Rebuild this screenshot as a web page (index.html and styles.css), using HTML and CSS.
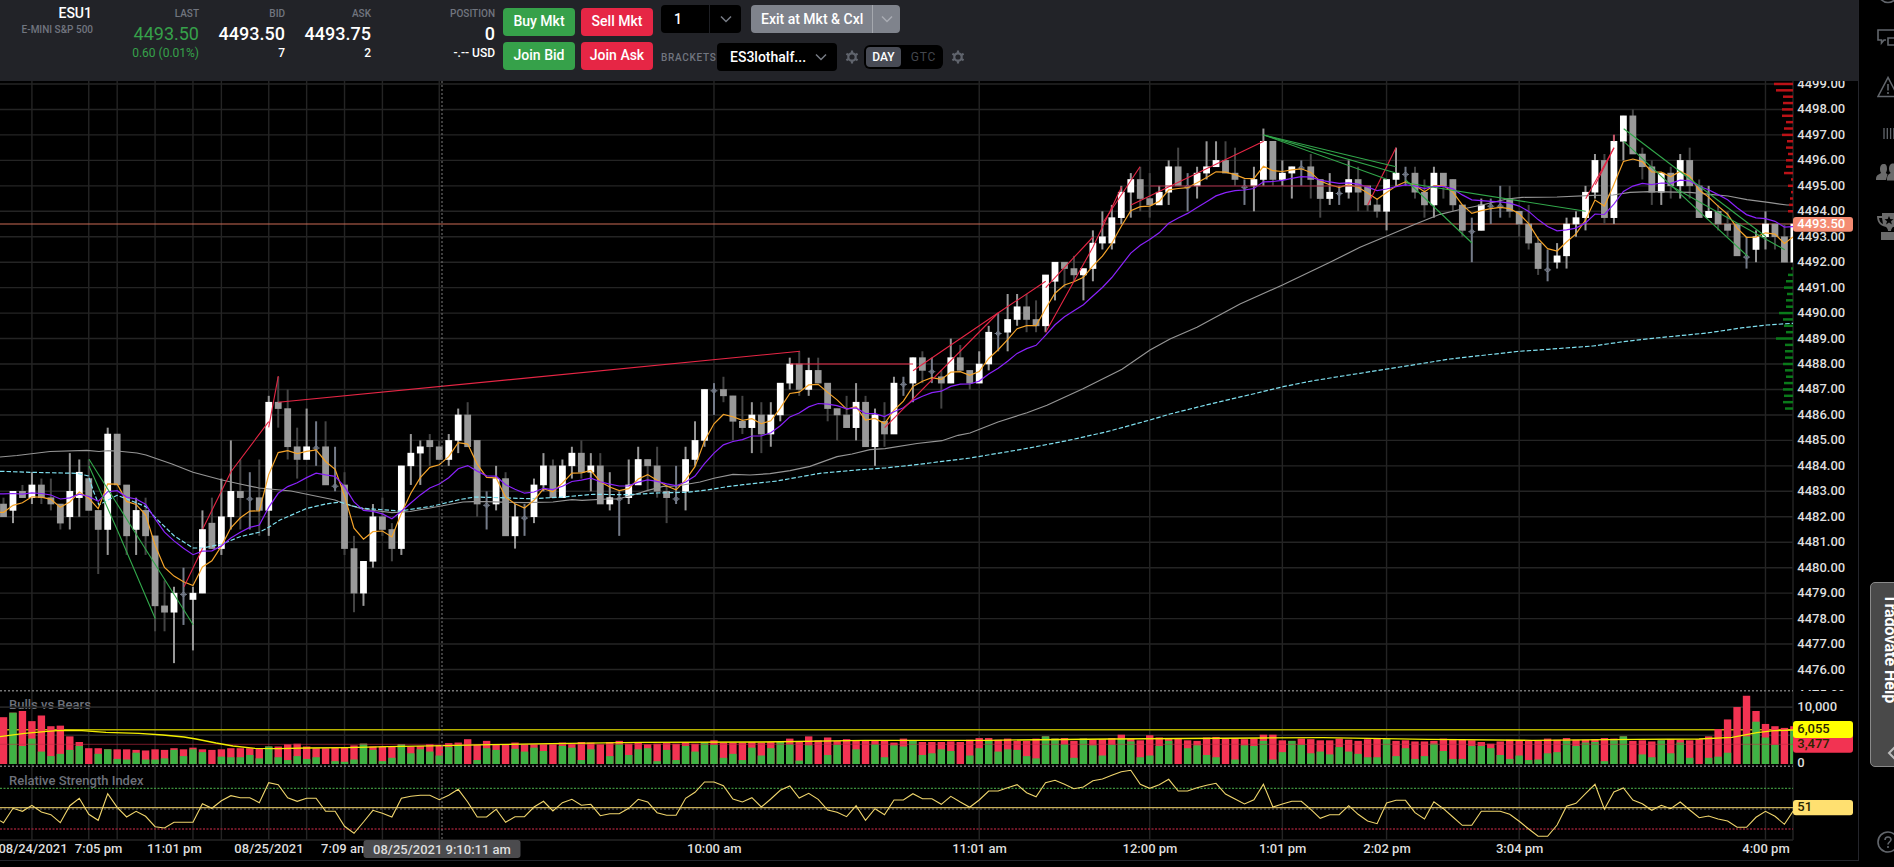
FILE: index.html
```
<!DOCTYPE html>
<html lang="en">
	<head>
		<title>ESU1 - E-MINI S&amp;P 500</title>
		<meta charset="utf-8">
		<link rel="stylesheet" href="styles.css">
	</head>
	<body>
		<div class="app">
			<div class="panel">
				<div class="topbar">
					<div class="quote symbol">
						<div class="sym">ESU1</div>
						<div class="label">E-MINI S&amp;P 500</div>
					</div>
					<div class="quote last">
						<div class="label">LAST</div>
						<div class="price">4493.50</div>
						<div class="sub">0.60 (0.01%)</div>
					</div>
					<div class="quote">
						<div class="label">BID</div>
						<div class="price">4493.50</div>
						<div class="sub">7</div>
					</div>
					<div class="quote">
						<div class="label">ASK</div>
						<div class="price">4493.75</div>
						<div class="sub">2</div>
					</div>
					<div class="quote position">
						<div class="label">POSITION</div>
						<div class="price">0</div>
						<div class="sub">-.-- USD</div>
					</div>
					<div class="trade">
						<button class="btn buy">Buy Mkt</button>
						<button class="btn sell">Sell Mkt</button>
						<button class="btn buy">Join Bid</button>
						<button class="btn sell">Join Ask</button>
					</div>
					<div class="orders">
						<div class="row">
							<div class="combo qty">
								<span class="value">1</span>
								<span class="arrow"><svg width="12" height="8" viewBox="0 0 12 8"><path d="M1 1.5l5 5 5-5"/></svg></span>
							</div>
							<div class="combo exit">
								<span class="value">Exit at Mkt &amp; Cxl</span>
								<span class="arrow"><svg width="12" height="8" viewBox="0 0 12 8"><path d="M1 1.5l5 5 5-5"/></svg></span>
							</div>
						</div>
						<div class="row brackets">
							<span class="blabel">BRACKETS</span>
							<div class="combo strategy">
								<span class="value">ES3lothalf...</span>
								<svg width="12" height="8" viewBox="0 0 12 8"><path d="M1 1.5l5 5 5-5"/></svg>
							</div>
							<svg class="gear" width="14" height="14" viewBox="0 0 14 14"><circle cx="7" cy="7" r="3.7"/><path d="M7 0.6v2.6M7 10.8v2.6M1.4 3.8l2.3 1.3M10.3 8.9l2.3 1.3M1.4 10.2l2.3-1.3M10.3 5.1l2.3-1.3"/></svg>
							<div class="toggle"><span class="on">DAY</span><span>GTC</span></div>
							<svg class="gear" width="14" height="14" viewBox="0 0 14 14"><circle cx="7" cy="7" r="3.7"/><path d="M7 0.6v2.6M7 10.8v2.6M1.4 3.8l2.3 1.3M10.3 8.9l2.3 1.3M1.4 10.2l2.3-1.3M10.3 5.1l2.3-1.3"/></svg>
						</div>
					</div>
				</div>
				<svg id="chart" class="chart" width="1858" height="779" viewBox="0 81 1858 779"></svg>
			</div>
			<div class="sidebar">
				<svg width="22" height="4" viewBox="0 0 22 4"><circle cx="11" cy="-7" r="9.5" class="line"/></svg>
				<svg class="chat" width="22" height="18" viewBox="0 0 22 18"><path class="line" d="M9 11H7l-2.500 3v-3H1V1h20v6"/><path class="line" d="M11 9h12v7H11z"/></svg>
				<svg class="warn" width="22" height="22" viewBox="0 0 22 22"><path class="line" d="M11 1.500L1 20.500h20z"/><path class="line" d="M11 8v6.500M11 16v2"/></svg>
				<svg class="bars" width="18" height="11" viewBox="0 0 18 11"><path class="thin" d="M1 0v11M4.300 0v11M7.600 0v11M10.900 0v11"/></svg>
				<svg class="people" width="24" height="18" viewBox="0 0 24 18"><path class="fill" d="M4 6c0-3 1-5 3.700-5S11 3 11 6c0 2-.8 3-1.200 4l1.700 1.200L10 17H0c0-4 1-5 5.200-7C4.500 9 4 8 4 6z"/><path class="fill" d="M13 6c0-3 1-5.500 4-5.500S21 3 21 6c0 2-.8 3-1.200 4 3 1 4.200 3 4.200 7.500H11c0-4.500.8-6 3.800-7.500C13.800 9 13 8 13 6z"/></svg>
				<svg class="trophy" width="24" height="28" viewBox="0 0 24 28"><path class="fill" d="M6 0h14v3h4c0 8-4 10-7 11-1 1-2 2-2 4h-3c0-2-1-3-2-4C6 13 1 11 1 3h5zM3 5c.3 3.500 2 5 4 6L6 5zM5 19h18v8H5z" fill-rule="evenodd"/><path d="M13 3l1.300 3 3.200.2-2.500 2 .9 3.200-2.900-1.800-2.900 1.800.9-3.200-2.500-2 3.200-.2z"/></svg>
				<div class="help-tab">
					<span>Tradovate Help</span>
					<svg width="8" height="14" viewBox="0 0 8 14"><path d="M8 1L2 7l6 6"/></svg>
				</div>
				<svg class="about" width="22" height="22" viewBox="0 0 22 22"><circle cx="11" cy="11" r="10" class="line"/><path class="line" d="M8 9c0-4 6-4 6-.5 0 2.500-3 2.500-3 5M11 15v2"/></svg>
			</div>
		</div>
		<script src="chart.js"></script>
	</body>
</html>
```
FILE: styles.css
```
* {box-sizing: border-box}

body, html {
	height: 100%;
	margin: 0;
	overflow: hidden;
	background-color: black;
	font-family: Roboto, "Liberation Sans", sans-serif;
}

:root {
	--bar: #222328;
	--green: #36a14a;
	--red: #e62645;
	--muted: #71757f;
}

.app {
	display: grid;
	grid-template-columns: 1859px 35px;
	height: 867px;
}
.panel {
	height: 861px;
	border-right: 1px solid #24252b;
	border-bottom: 1px solid #24252b;
}

/* Top bar with quotes and order buttons */
.topbar {
	display: flex;
	height: 81px;
	background-color: var(--bar);
	color: white;
}
.quote {
	width: 86px;
	padding-top: 8px;
	text-align: right;
	font-weight: 500;
	white-space: nowrap;
}
.symbol {
	width: 93px;
	padding-top: 5px;
}
.sym {
	font-size: 14px;
	line-height: 16px;
	padding-right: 1px;
	margin-bottom: 3px;
}
.label {
	font-size: 10px;
	line-height: 12px;
	color: var(--muted);
}
.price {
	font-size: 18px;
	line-height: 22px;
	margin-top: 3px;
}
.sub {
	font-size: 12px;
	line-height: 16px;
}
.last { width: 106px; }
.last .price, .last .sub {
	color: var(--green);
	font-weight: 400;
}
.position { width: 124px; }
.trade {
	display: grid;
	grid-template-columns: 72px 72px;
	grid-template-rows: 28px 28px;
	gap: 6px;
	padding: 8px 0 0 8px;
}
.btn {
	border: none;
	border-radius: 4px;
	padding: 0 0 2px;
	color: white;
	font-family: inherit;
	font-size: 14px;
	font-weight: 500;
}
.buy { background-color: var(--green); }
.sell { background-color: var(--red); }

.orders {
	padding: 5px 0 0 8px;
}
.row {
	display: flex;
	gap: 10px;
}
.combo {
	display: flex;
	align-items: center;
	height: 28px;
	border-radius: 4px;
	background-color: black;
	font-size: 14px;
	font-weight: 500;
}
.combo svg {
	fill: none;
	stroke: #777b84;
	stroke-width: 1.5;
}
.arrow {
	display: flex;
	align-items: center;
	justify-content: center;
	height: 28px;
	width: 32px;
	border-left: 1px solid #1e1f24;
}
.qty .value {
	width: 48px;
	padding: 0 0 0 13px;
}
.exit {
	width: 149px;
	background-color: #7f838c;
}
.exit .value {
	width: 121px;
	padding: 0 0 1px 10px;
	white-space: nowrap;
}
.exit .arrow {
	width: 28px;
	border-color: #a5a8ae;
}
.exit svg { stroke: #a9acb3; }
.brackets {
	margin-top: 10px;
	gap: 0;
	align-items: center;
}
.blabel {
	width: 56px;
	color: var(--muted);
	font-size: 10px;
	font-weight: 500;
	letter-spacing: 0.7px;
}
.strategy {
	width: 120px;
	padding: 0 10px 0 13px;
	justify-content: space-between;
}
.gear {
	margin: 0 5px 0 8px;
	fill: none;
	stroke: #60646d;
	stroke-width: 2.2;
}
.toggle {
	display: flex;
	width: 79px;
	height: 24px;
	padding: 2px 0 2px 2px;
	border-radius: 6px;
	background-color: black;
	color: #43464d;
	font-size: 12px;
	line-height: 20px;
	letter-spacing: 0.8px;
}
.toggle span {
	flex: 1;
	padding-left: 3px;
	text-align: center;
}
.toggle .on {
	flex: none;
	width: 35px;
	padding: 0;
	border-radius: 4px;
	background-color: #484b55;
	color: white;
	font-weight: 500;
	letter-spacing: 0;
}

/* Chart */
.chart { display: block; }
.chart text {
	font-size: 13px;
	font-weight: 500;
	fill: #dedede;
}
.chart .study { fill: #6d717b; }
.chart .mid { text-anchor: middle; }
.chart .dark { fill: #2a2500; }
.chart .bright { fill: white; }
.grid { stroke: #242424; stroke-width: 1.4; }
.dots { stroke: #777; stroke-width: 1.4; stroke-dasharray: 2 2; }
.wick { stroke-width: 2; }
.up { fill: white; stroke: #999; }
.down { fill: #999; stroke: #444; }
.doji { fill: none; stroke: #747b89; }
.body { stroke: none; }
.ma { fill: none; stroke-width: 1.2; }
.trade-win { stroke: #32a84b; stroke-width: 1.1; fill: none; }
.trade-loss { stroke: #e62645; stroke-width: 1.1; fill: none; }

/* Icons on the right edge */
.sidebar {
	display: flex;
	flex-direction: column;
	overflow: hidden;
	padding-left: 18px;
}
.sidebar svg { flex: none; }
.sidebar .line { fill: none; stroke: #62666c; stroke-width: 1.6; }
.sidebar .thin { stroke: #62666c; stroke-width: 1.3; }
.sidebar .fill { fill: #6b6b6b; }
.chat { margin-top: 25px; }
.warn { margin-top: 29px; }
.bars { margin: 30px 0 0 6px; }
.people { margin: 24px 0 0 -1px; }
.trophy { margin: 32px 0 0 -1px; }
.help-tab {
	flex: none;
	display: flex;
	flex-direction: column;
	align-items: flex-start;
	justify-content: space-between;
	width: 50px;
	height: 185px;
	margin: 341px 0 0 -7px;
	padding: 11px 0 6px 9px;
	border: 1px solid #8a8a8a;
	border-radius: 5px;
	background-color: #494949;
	color: white;
}
.help-tab span {
	writing-mode: vertical-rl;
	font-size: 16px;
	font-weight: 700;
	line-height: 20px;
}
.help-tab svg {
	margin-left: 7px;
	fill: none;
	stroke: #bbb;
	stroke-width: 2;
}
.about { margin-top: 64px; }
```
FILE: chart.js
```
// Candles are open, high, low, close in quarter points above 4476.00
var candles = [
	[26,27,24,24],[25,28,23,28],[28,29,27,27],[27,31,26,29],[29,30,26,27],[27,30,25,26],[26,26,22,23],[24,34,22,28],[27,33,24,31],[30,33,25,25],
	[25,25,15,22],[22,38,18,37],[37,37,29,29],[29,29,18,21],[22,27,18,25],[25,27,18,21],[21,21,6,10],[10,14,6,9],[9,13,1,12],[12,16,7,12],
	[11,13,3,12],[12,25,12,22],[23,27,19,19],[19,30,18,24],[24,36,22,28],[28,33,22,27],[27,31,22,27],[27,33,21,25],[25,43,21,42],[42,46,38,41],
	[41,44,33,35],[35,38,30,33],[33,41,33,35],[35,39,32,35],[35,39,29,29],[29,35,28,29],[29,31,18,19],[19,21,9,12],[12,17,10,17],[17,26,16,24],
	[24,27,21,22],[22,23,17,19],[19,32,18,32],[32,37,29,34],[34,36,29,35],[36,37,32,35],[35,36,33,33],[33,37,32,36],[36,41,34,40],[40,42,35,35],
	[36,36,24,26],[26,28,22,26],[26,32,25,30],[30,31,21,21],[21,26,19,24],[24,26,21,24],[24,30,23,29],[29,34,28,32],[32,33,27,27],[27,33,27,32],
	[32,35,30,34],[34,36,30,31],[31,34,28,32],[32,34,26,26],[26,31,25,27],[27,28,21,27],[27,33,26,29],[29,35,29,33],[33,33,28,32],[32,35,27,28],
	[28,29,23,27],[27,32,26,27],[28,35,25,33],[33,39,32,36],[36,44,35,44],[44,45,40,44],[44,46,42,43],[43,43,36,39],[39,43,37,38],[38,42,34,40],
	[40,42,34,37],[37,42,35,40],[40,45,39,45],[45,49,44,48],[48,50,43,44],[44,49,43,47],[47,49,45,45],[45,45,39,41],[41,41,36,40],[40,43,38,38],
	[38,45,36,42],[42,43,35,35],[35,41,32,40],[39,42,35,37],[37,46,37,45],[45,46,43,45],[45,49,42,49],[49,50,45,47],[47,49,45,47],[46,47,41,45],
	[45,52,45,49],[49,51,47,47],[47,47,44,45],[45,50,45,48],[48,54,47,53],[53,56,50,53],[53,59,50,55],[55,59,54,57],[57,59,53,55],[55,58,53,54],
	[54,62,53,62],[61,64,58,64],[64,64,60,63],[63,65,61,62],[62,63,58,63],[63,69,61,67],[67,72,66,68],[67,73,66,71],[71,76,70,75],[75,78,71,77],
	[77,79,72,74],[74,78,71,73],[73,76,73,75],[75,80,73,79],[79,82,76,76],[76,78,72,76],[76,79,74,78],[78,83,77,79],[79,83,79,80],[80,83,78,78],
	[78,82,76,77],[76,77,73,76],[76,79,72,77],[77,85,76,83],[83,83,76,77],[77,80,76,78],[78,79,74,79],[79,80,76,79],[79,81,74,77],[77,77,71,74],
	[74,78,73,75],[75,76,73,75],[75,80,74,77],[77,79,72,75],[76,76,72,73],[73,74,71,72],[72,77,69,77],[77,82,76,78],[78,79,76,78],[78,79,74,75],
	[75,77,71,73],[73,79,71,78],[78,78,74,76],[77,77,72,73],[73,73,68,69],[69,71,64,69],[69,74,69,73],[73,74,70,73],[73,76,71,73],[74,76,71,72],
	[72,72,68,70],[70,73,66,67],[67,68,62,63],[63,66,61,63],[64,67,63,65],[65,71,63,70],[70,72,68,71],[71,76,69,75],[75,81,74,80],[80,81,70,71],
	[71,84,70,83],[83,87,80,87],[87,88,81,81],[81,82,77,79],[79,80,73,75],[75,78,73,78],[78,79,74,76],[76,81,74,80],[80,82,74,76],[76,77,71,71],
	[71,76,71,72],[72,73,69,70],[70,72,68,69],[70,70,65,65],[65,68,63,65],[66,69,64,68],[68,72,66,70],[70,70,66,68],[68,70,64,64],[64,70,64,70]
];

// Volume in hundreds: total, bulls
var volume = [
	[83,0],[91,91],[94,32],[76,45],[86,22],[67,14],[68,18],[49,25],[39,32],[28,0],[28,18],[26,26],[26,9],[26,8],[25,20],[24,8],[26,8],[25,10],[28,25],[26,14],
	[29,26],[26,21],[25,0],[26,13],[28,12],[28,12],[28,16],[28,10],[31,31],[31,12],[35,7],[36,14],[31,9],[28,12],[28,0],[29,5],[29,4],[33,8],[36,36],[31,25],
	[31,5],[31,11],[35,35],[31,19],[32,26],[35,22],[33,15],[37,30],[38,33],[44,0],[34,7],[41,28],[35,25],[35,0],[38,27],[35,22],[35,29],[35,23],[35,0],[38,32],
	[36,29],[39,7],[38,26],[35,0],[39,14],[41,35],[36,16],[39,26],[35,28],[36,5],[37,25],[36,7],[39,32],[36,22],[38,38],[42,34],[38,11],[38,18],[38,7],[39,29],
	[38,15],[39,28],[39,39],[45,35],[39,6],[49,33],[42,0],[47,16],[41,34],[44,0],[41,26],[41,0],[41,35],[41,12],[38,33],[45,31],[42,42],[39,16],[39,19],[39,26],
	[40,23],[39,0],[43,15],[46,28],[46,41],[43,22],[45,26],[41,25],[41,14],[45,10],[49,49],[45,45],[46,35],[41,11],[45,45],[43,33],[44,15],[46,34],[52,44],[45,40],
	[42,12],[51,15],[47,32],[46,41],[46,0],[42,28],[41,33],[47,16],[48,12],[46,0],[46,8],[44,33],[45,32],[52,41],[52,8],[42,21],[41,41],[45,34],[44,19],[42,22],
	[42,17],[45,30],[43,22],[41,18],[44,12],[46,12],[44,44],[41,14],[42,28],[40,9],[40,14],[41,36],[45,23],[43,9],[43,9],[42,32],[39,32],[36,28],[40,16],[43,9],
	[42,15],[42,7],[41,8],[45,19],[43,21],[46,41],[43,32],[43,38],[44,39],[46,5],[45,42],[49,49],[41,0],[42,17],[40,12],[42,42],[44,19],[43,38],[42,11],[44,0],
	[49,11],[62,13],[79,20],[101,0],[121,49],[94,75],[71,47],[67,34],[64,0],[67,60]
];

// RSI line, thirds of a pixel below y = 670
var rsi = [
	458,415,424,406,426,434,458,407,385,433,451,371,412,441,424,439,470,474,457,457,457,401,415,392,377,383,383,398,338,344,383,394,385,385,424,424,469,490,
	456,421,430,441,385,379,376,376,389,376,358,396,441,441,418,457,440,440,411,394,423,398,388,406,403,437,431,431,415,388,396,428,436,436,385,367,336,336,
	347,387,396,383,411,387,361,348,384,370,388,420,427,440,407,451,416,434,390,390,371,386,386,403,379,396,412,390,363,363,353,344,368,380,338,331,343,356,
	351,332,327,316,305,301,343,355,344,328,363,363,353,346,340,372,387,402,389,343,411,402,394,394,418,445,434,434,407,433,453,461,399,391,391,428,447,395,
	416,441,466,466,424,424,424,433,454,477,499,499,465,409,400,371,343,418,366,354,390,401,421,406,416,396,420,443,438,447,453,472,472,442,424,439,463,420
];

var slow = "0,457 17,455.5 50,451.5 87,450.3 99,451.5 108,450.6 117,451 137,453 146,455 172,464 193,472.3 222,480 240,484 259,488 291,491 335,500 345,504 358,507.7 370,510 392,512.7 410,511.5 430,508 463,502 473,501.7 487,501.7 525,502.7 553,502 572,499.7 582,500.3 607,499 618,499 633,495 647,490.7 663,486.3 677,486 700,482 715,478 733,474.3 750,475 770,473.7 790,470.7 810,466.3 837,456.7 852,454 870,449.7 885,448.6 917,443.5 942,440.7 958,435.3 970,433 998,422 1027,412.7 1047,405.3 1083,388.7 1122,369.3 1150,350 1170,339 1197,327.3 1240,304 1283,284.7 1330,262.3 1360,247.3 1387,236 1415,224.3 1440,214.3 1458,210 1482,205 1507,199 1522,197.3 1557,197 1593,195.3 1613,195 1630,192.3 1650,191.7 1690,192.3 1710,194.3 1728,196 1747,199.7 1770,202.7 1787,205 1793,205";
var vwap = "0,471.3 30,472.3 77,473.3 88.5,476 93,490 99,505 108,500 117,495.3 127,499 146,506.7 155,517.3 174,535.7 193,548 203,548 222,544 240,536.7 259,532.3 267,528.3 280,520 307,508.3 326,504 340,502 353,506 363,508.3 400,511 433,506 460,499.5 475,497 500,497.7 530,498.7 560,497.3 593,494.3 627,494.7 657,493 687,492.3 707,490 727,486.7 743,484.7 777,481 820,473.3 860,469.7 885,468 913,465 940,461.7 970,458 1022,449.3 1067,440.7 1107,431.7 1150,420 1170,414 1213,403.3 1253,394 1283,386.7 1313,380.7 1360,373.3 1400,367 1450,359 1517,351.5 1548,349.3 1593,346 1623,341.7 1653,338.3 1707,333 1743,327.7 1767,325 1793,323.3";
var volAvg = "0,736.7 24.5,733.3 47,731.3 61,730.3 82,730.7 106,732.3 139,733.3 163,735 184,737 196,739 216,743 233,746 255,748.3 278,748.7 306,748 347,747.7 388,746.7 445,745.7 490,744.7 551,743.7 640,742.3 763,742 865,740.3 987,740.3 1110,739 1260,738 1323,737.7 1428,739.3 1532,740.3 1636,739.3 1699,739 1732,737.3 1757,732.7 1774,730.7 1793,730";

var losses = [
	"184,586.7 202.7,548", "202.7,529 231,471.7 268.7,421.7", "268.7,427.3 278.3,376", "278.3,402.3 800,351.3", "790,364 913,364", "913,370.7 998,313 1045.7,281.3",
	"884.7,427.7 998,313", "1045.7,287.7 1093,237", "1045.7,332.3 1093,247 1121.7,186.7", "1102.7,223 1140,166.7", "1131,205 1263.7,141.3",
	"1367.7,205 1396,147.7", "1585.7,198.7 1614,147.7", "1595.3,184.7 1614,147.7", "1614,134.5 1614,141.3"
];
var wins = [
	"89,459.3 193.3,625", "89,466 117.3,530 155.3,618.7", "1263.7,135 1396,166.7", "1263.7,135 1396,173", "1263.7,135 1386.7,179.3", "1405.7,180 1472,243",
	"1406.7,183 1585.7,211.3", "1623.7,128.7 1766,236.7", "1623.7,141.3 1747.3,256", "1671,186 1784.7,249.7"
];

// Order book depth, one bar per tick
var asks = [19,17,10,10,11,11,7,9,11,6,7,5,7,7,9,2,5,2,3,4,5];   // from 4499.00 down
var bids = [2,5,7,9,6,7,7,14,10,9,7,17,8,8,8,10,8,7,9,10,9,10,8]; // from 4491.75 down

var gridBars = [3,9,12,16,20,23,28,32,36,40,46,75,103,121,135,146,160,186];
var times = [[33,"08/24/2021"],[98.6,"7:05 pm"],[174.3,"11:01 pm"],[269,"08/25/2021"],[344.7,"7:09 am"],[714.3,"10:00 am"],[979.5,"11:01 am"],[1150,"12:00 pm"],[1282.7,"1:01 pm"],[1387,"2:02 pm"],[1519.7,"3:04 pm"],[1766,"4:00 pm"]];

var RIGHT = 1793;
var out = "";

function px(i) { return 3.5 + i * 9.473; }
function py(t) { return 669.5 - t * 6.364; }
function hline(y, cls, style) {
	out += '<line class="' + cls + '" x1="0" x2="' + RIGHT + '" y1="' + y + '" y2="' + y + '" ' + (style || "") + '/>';
}
function vline(x, y1, y2, cls) {
	out += '<line class="' + cls + '" x1="' + x + '" x2="' + x + '" y1="' + y1 + '" y2="' + y2 + '"/>';
}
function rect(x, y, w, h, color, r) {
	out += '<rect x="' + x + '" y="' + y + '" width="' + w + '" height="' + h + '" fill="' + color + '" rx="' + (r || 0) + '"/>';
}
function line(points, cls, attrs) {
	out += '<polyline class="' + cls + '" points="' + points + '" fill="none" ' + (attrs || "") + '/>';
}
function text(x, y, s, cls) {
	out += '<text x="' + x + '" y="' + y + '" class="' + (cls || "") + '">' + s + '</text>';
}
function ema(period, start) {
	var k = 2 / (period + 1), v = start, pts = [];
	for (var i = 0; i < candles.length; i++) {
		if (i > 0)
			v += k * (candles[i][3] - v);
		pts.push(Math.min(px(i), RIGHT).toFixed(1) + "," + py(v).toFixed(1));
	}
	return "0," + py(start).toFixed(1) + " " + pts.join(" ");
}

// Grid
for (var t = 0; t <= 92; t += 4)
	hline(py(t), "grid");
[707.3, 735.3, 840].forEach(function(y) { hline(y, "grid"); });
gridBars.forEach(function(i) { vline(px(i), 81, 840, "grid"); });
vline(RIGHT, 81, 840, "grid");
text(9, 709, "Bulls vs Bears", "study");
hline(707.3, "grid");
text(9, 785, "Relative Strength Index", "study");
hline(py(70), "", 'stroke="#c96a54" stroke-width="1.2"');

// Candles
out += '<defs><clipPath id="plot"><rect x="0" y="81" width="' + RIGHT + '" height="780"/></clipPath><clipPath id="scale"><rect x="1790" y="81" width="68" height="610"/></clipPath></defs>';
out += '<g clip-path="url(#plot)">';
candles.forEach(function(c, i) {
	var x = px(i), cls = c[3] > c[0] ? "up" : c[3] < c[0] ? "down" : "doji";
	vline(x, py(c[1]), py(c[2]), "wick " + cls);
	if (cls == "doji") {
		var y = py(c[0]) + 1.3;
		out += '<circle class="doji" cx="' + x + '" cy="' + y + '" r="2"/><path class="doji" d="M' + (x - 3.5) + ' ' + y + 'h7"/>';
	}
	else {
		var top = py(Math.max(c[0], c[3]));
		out += '<rect class="body ' + cls + '" x="' + (x - 3.4) + '" y="' + (top - 0.3) + '" width="6.8" height="' + (Math.abs(c[0] - c[3]) * 6.364 + 0.6) + '"/>';
	}
});

// Studies over price
line(slow, "ma", 'stroke="#959595"');
line(vwap, "ma", 'stroke="#7fe0f0" stroke-dasharray="4.500 2"');
line(ema(5, 24.7), "ma", 'stroke="#f5a42a"');
line(ema(13, 27.6), "ma", 'stroke="#8a22fa"');
line("1150,186 1370,186", "ma", 'stroke="#a32540" stroke-width="1.5"');
losses.forEach(function(p) { line(p, "trade-loss"); });
wins.forEach(function(p) { line(p, "trade-win"); });

// Volume
hline(729.7, "", 'stroke="#b9b400" stroke-width="1.4"');
volume.forEach(function(v, i) {
	var x = px(i) - 3.7;
	rect(x, 764 - v[0] * 0.564, 7.4, v[0] * 0.564, "#f23352");
	rect(x, 764 - v[1] * 0.564, 7.4, v[1] * 0.564, "#3fb244");
});
hline(744.3, "", 'stroke="#c32b45" stroke-width="1" stroke-opacity="0.6"');
line(volAvg, "", 'stroke="#f2ee00" stroke-width="1.3"');

// RSI
hline(788.3, "", 'stroke="#3c8f3c" stroke-width="1.3" stroke-dasharray="2 1.500"');
hline(829, "", 'stroke="#8f1f33" stroke-width="1.5" stroke-dasharray="2 1.500"');
hline(807.6, "", 'stroke="#c9b05a" stroke-width="1.4"');
hline(809, "dots", 'stroke-opacity="0.6"');
line("0,820.7 " + rsi.map(function(v, i) { return px(i).toFixed(1) + "," + (670 + v / 3).toFixed(1); }).join(" "), "", 'stroke="#f0d56c" stroke-width="1.1"');
out += '</g>';
hline(690.7, "dots");
hline(766.3, "dots");
out += '<g opacity="0.75">';
vline(442, 81, 840, "dots");
out += '</g>';

// Depth
asks.forEach(function(w, n) { rect(RIGHT - w, py(92 - n) - 1.3, w, 2.5, "#bb1217"); });
bids.forEach(function(w, n) { rect(RIGHT - w, py(63 - n) - 1.3, w, 2.5, "#0a7a1a"); });

// Price scale
out += '<g clip-path="url(#scale)">';
for (var p = 4475; p <= 4499; p++)
	text(1797.3, py((p - 4476) * 4) + 4, p + ".00");
out += '</g>';
rect(1793, 217, 60, 14.7, "#f48b72", 3);
text(1797.3, 228, "4493.50", "bright");
text(1797.3, 711, "10,000");
text(1797.3, 767, "0");
rect(1793, 734, 60, 18.7, "#f23352", 3);
text(1797.3, 748, "3,477", "dark");
rect(1793, 721, 60, 17, "#ffff00", 3);
text(1797.3, 733, "6,055", "dark");
rect(1793, 800, 60, 15.3, "#ffe070", 3);
text(1797.3, 811.3, "51", "dark");

// Time scale
times.forEach(function(t) { text(t[0], 853, t[1], "mid"); });
rect(363.5, 840, 157, 18, "#4b4b4e", 3);
text(442, 854, "08/25/2021 9:10:11 am", "mid");

document.getElementById("chart").innerHTML = out;
```
